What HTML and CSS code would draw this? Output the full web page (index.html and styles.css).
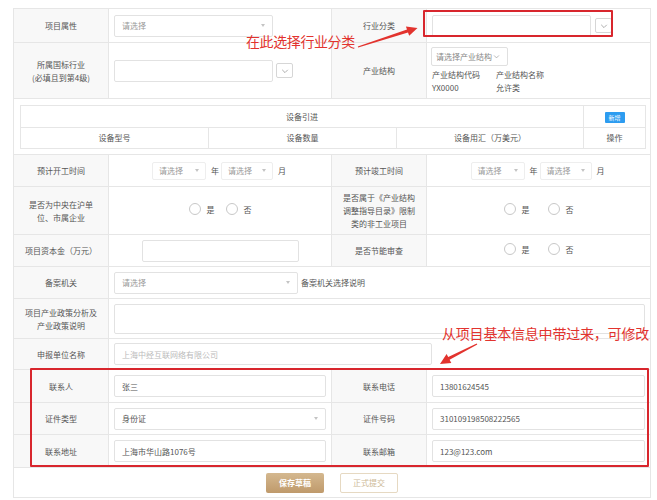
FILE: index.html
```html
<!DOCTYPE html>
<html lang="zh">
<head>
<meta charset="utf-8">
<title>项目信息</title>
<link rel="stylesheet" href="styles.css">
</head>
<body>
<div class="page">
  <table class="form">
    <colgroup><col class="c-lab"><col class="c-val"><col class="c-lab"><col class="c-val2"></colgroup>
    <tr class="h34">
      <th>项目属性</th>
      <td><div class="sel w159"><span class="ph">请选择</span><span class="caret"></span></div></td>
      <th>行业分类</th>
      <td><div class="combo"><span class="box w159"></span><span class="ddbtn"><svg viewBox="0 0 10 10" width="8" height="8"><polyline points="1.5,3.5 5,7 8.5,3.5" fill="none" stroke="#999" stroke-width="1"/></svg></span></div></td>
    </tr>
    <tr class="h56">
      <th>所属国标行业<br>(必填且到第4级)</th>
      <td><div class="combo g3"><span class="box w159"></span><span class="ddbtn"><svg viewBox="0 0 10 10" width="8" height="8"><polyline points="1.5,3.5 5,7 8.5,3.5" fill="none" stroke="#999" stroke-width="1"/></svg></span></div></td>
      <th>产业结构</th>
      <td class="top">
        <div class="struct-btn">请选择产业结构<svg viewBox="0 0 10 10" width="7" height="7"><polyline points="1.5,3.5 5,7 8.5,3.5" fill="none" stroke="#999" stroke-width="1"/></svg></div>
        <div class="struct-grid">
          <span>产业结构代码</span><span>产业结构名称</span>
          <span>YX0000</span><span>允许类</span>
        </div>
      </td>
    </tr>
    <tr class="h54">
      <td colspan="4" class="equip-cell">
        <table class="equip">
          <colgroup><col class="e1"><col class="e1"><col class="e3"><col class="e4"></colgroup>
          <tr class="h22"><td colspan="3">设备引进</td><td><span class="badge">新增</span></td></tr>
          <tr class="h21"><td>设备型号</td><td>设备数量</td><td>设备用汇（万美元）</td><td>操作</td></tr>
        </table>
      </td>
    </tr>
    <tr class="h32">
      <th>预计开工时间</th>
      <td class="center"><div class="ym"><span class="sel sm w54"><span class="ph">请选择</span><span class="caret"></span></span><span class="unit">年</span><span class="sel sm w52"><span class="ph">请选择</span><span class="caret"></span></span><span class="unit">月</span></div></td>
      <th>预计竣工时间</th>
      <td class="center"><div class="ym"><span class="sel sm w54"><span class="ph">请选择</span><span class="caret"></span></span><span class="unit">年</span><span class="sel sm w52"><span class="ph">请选择</span><span class="caret"></span></span><span class="unit">月</span></div></td>
    </tr>
    <tr class="h48">
      <th>是否为中央在沪单<br>位、市属企业</th>
      <td class="center"><div class="radios"><span class="radio"></span><span>是</span><span class="radio r2"></span><span>否</span></div></td>
      <th>是否属于《产业结构<br>调整指导目录》限制<br>类的非工业项目</th>
      <td class="center"><div class="radios wide"><span class="radio"></span><span>是</span><span class="radio r2"></span><span>否</span></div></td>
    </tr>
    <tr class="h32">
      <th>项目资本金（万元）</th>
      <td class="center"><div class="box w157 h22 inl"></div></td>
      <th>是否节能审查</th>
      <td class="center"><div class="radios wide"><span class="radio"></span><span>是</span><span class="radio r2"></span><span>否</span></div></td>
    </tr>
    <tr class="h32">
      <th>备案机关</th>
      <td colspan="3"><div class="filing"><div class="sel w184"><span class="ph">请选择</span><span class="caret"></span></div><span class="note">备案机关选择说明</span></div></td>
    </tr>
    <tr class="h40">
      <th>项目产业政策分析及<br>产业政策说明</th>
      <td colspan="3"><div class="box area"></div></td>
    </tr>
    <tr class="h31">
      <th>申报单位名称</th>
      <td colspan="3"><div class="box w318 h22"><span class="ph light">上海中经互联网络有限公司</span></div></td>
    </tr>
    <tr class="h33">
      <th>联系人</th>
      <td><div class="box full h21"><span class="val">张三</span></div></td>
      <th>联系电话</th>
      <td><div class="box full h21"><span class="val">13801624545</span></div></td>
    </tr>
    <tr class="h32">
      <th>证件类型</th>
      <td><div class="sel full h21"><span class="val">身份证</span><span class="caret"></span></div></td>
      <th>证件号码</th>
      <td><div class="box full h21"><span class="val">310109198508222565</span></div></td>
    </tr>
    <tr class="h33">
      <th>联系地址</th>
      <td><div class="box full h21"><span class="val">上海市华山路1076号</span></div></td>
      <th>联系邮箱</th>
      <td><div class="box full h21"><span class="val">123@123.com</span></div></td>
    </tr>
    <tr class="h30">
      <td colspan="4" class="actions-cell"><div class="actions"><span class="btn primary">保存草稿</span><span class="btn ghost">正式提交</span></div></td>
    </tr>
  </table>

  <div class="redbox rb1"></div>
  <div class="redbox rb2"></div>
  <div class="anno a1">在此选择行业分类</div>
  <div class="anno a2">从项目基本信息中带过来，可修改</div>
  <svg class="arrows" viewBox="0 0 657 500" width="657" height="500">
    <polygon fill="#e2332e" points="358.2,47.6 408.0,32.5 409.2,35.8 417.5,28 405.9,26.5 407.0,29.6 357.8,46.4"/>
    <polygon fill="#e2332e" points="477.3,344.5 449.6,359.7 451.3,363 440,364 446.6,354 448.2,357.1 476.7,343.5"/>
  </svg>
</div>
</body>
</html>
```

FILE: styles.css
```css
html, body {
  margin: 0;
  padding: 0;
  background: #fff;
}
body {
  font-family: "Noto Sans CJK SC", "Noto Sans", sans-serif;
  font-size: 8px;
  color: #555;
}
.page {
  position: relative;
  width: 657px;
  height: 500px;
  padding: 8px 0 0 13px;
  box-sizing: border-box;
  overflow: hidden;
}
.form {
  width: 637px;
  border-collapse: collapse;
  table-layout: fixed;
}
.c-lab { width: 95px; }
.c-val { width: 223px; }
.c-val2 { width: 224px; }
.form > tbody > tr > th,
.form > tbody > tr > td {
  border: 1px solid #e6e6e6;
  padding: 0 5px;
  vertical-align: middle;
  line-height: 13px;
}
.form > tbody > tr > th {
  background: #f8f8f8;
  font-weight: normal;
  text-align: center;
  color: #555;
  padding: 0 2px;
}
.h21 { height: 21px; }
.h22 { height: 22px; }
.h30 { height: 30px; }
.h31 { height: 31px; }
.h32 { height: 32px; }
.h33 { height: 33px; }
.h34 { height: 34px; }
.h40 { height: 40px; }
.h48 { height: 48px; }
.h54 { height: 54px; }
.h56 { height: 56px; }
.center { text-align: center; }
td.top { vertical-align: top; padding-top: 4px; }

/* controls */
.box, .sel {
  box-sizing: border-box;
  border: 1px solid #e2e2e2;
  border-radius: 2px;
  background: #fff;
  height: 22px;
  display: flex;
  align-items: center;
  padding: 0 7px;
}
.sel { justify-content: space-between; }
.w159 { width: 159px; }
.w157 { width: 157px; }
.w184 { width: 184px; }
.w318 { width: 318px; }
.w54 { width: 54px; }
.w52 { width: 52px; }
.full { width: 100%; }
.inl { display: inline-block; vertical-align: middle; }
.ph { color: #999; }
.ph.light { color: #bbb; }
.val { color: #555; }
.caret {
  width: 0;
  height: 0;
  border-left: 2.5px solid transparent;
  border-right: 2.5px solid transparent;
  border-top: 3px solid #c4c4c4;
}
.combo {
  display: flex;
  align-items: center;
  gap: 4px;
}
.combo.g3 { gap: 3px; }
.ddbtn {
  box-sizing: border-box;
  width: 17px;
  height: 15px;
  border: 1px solid #d6d6d6;
  border-radius: 2px;
  display: flex;
  align-items: center;
  justify-content: center;
  background: #fff;
}
.struct-btn {
  box-sizing: border-box;
  display: inline-flex;
  align-items: center;
  gap: 1px;
  height: 19px;
  width: 77px;
  padding: 0 4px;
  border: 1px solid #e0e0e0;
  border-radius: 2px;
  color: #888;
  margin-left: -1px;
}
.struct-grid {
  display: grid;
  grid-template-columns: 64px auto;
  line-height: 13px;
  color: #555;
  margin-top: 2px;
}

/* equipment */
.form > tbody > tr > td.equip-cell { padding: 6px 6px 5px 6px; }
.equip {
  width: 100%;
  border-collapse: collapse;
  table-layout: fixed;
}
.e1 { width: 188px; }
.e3 { width: 187px; }
.e4 { width: 62px; }
.equip td {
  border: 1px solid #e6e6e6;
  text-align: center;
  padding: 0;
  color: #555;
  line-height: 12px;
}
.badge {
  display: inline-block;
  vertical-align: middle;
  background: #2d9cf0;
  color: #fff;
  font-size: 6px;
  line-height: 11px;
  width: 20px;
  border-radius: 1px;
}

/* year/month */
.ym {
  display: inline-flex;
  align-items: center;
}
.sel.sm {
  height: 18px;
  border-color: #eee;
  padding: 0 6px;
}
.unit { margin: 0 2px 0 5px; color: #555; }

/* radios */
.radios {
  display: inline-flex;
  align-items: center;
  color: #555;
}
.radio {
  box-sizing: border-box;
  width: 12px;
  height: 12px;
  border: 1px solid #c8c8c8;
  border-radius: 50%;
  margin-right: 6px;
}
.radio.r2 { margin-left: 11px; }
.radios.wide .radio.r2 { margin-left: 18px; }

.filing {
  display: flex;
  align-items: center;
}
.filing .note { margin-left: 3px; }
.box.area { height: 30px; width: 100%; }

/* actions */
.actions {
  display: flex;
  justify-content: center;
  gap: 16px;
}
.btn {
  box-sizing: border-box;
  width: 58px;
  height: 20px;
  display: flex;
  align-items: center;
  justify-content: center;
  border-radius: 2px;
  font-size: 8px;
}
.btn.primary {
  background: linear-gradient(#d4b88f, #bf9a6b);
  color: #fff;
  font-weight: bold;
}
.btn.ghost {
  border: 1px solid #e6d9c2;
  color: #cdb995;
  background: #fff;
}

/* annotations */
.redbox {
  position: absolute;
  box-sizing: border-box;
  border: 2px solid #d8262d;
  border-radius: 1px;
}
.rb1 { left: 423px; top: 10px; width: 190px; height: 27px; }
.rb2 { left: 30px; top: 368px; width: 619px; height: 99px; }
.anno {
  position: absolute;
  font-family: "Noto Sans CJK SC", sans-serif;
  font-size: 14px;
  line-height: 16px;
  color: #e2332e;
  white-space: nowrap;
}
.a1 { left: 246px; top: 33px; letter-spacing: -0.4px; }
.a2 { left: 442px; top: 325px; letter-spacing: -0.2px; }
.arrows {
  position: absolute;
  left: 0;
  top: 0;
  pointer-events: none;
}
```
